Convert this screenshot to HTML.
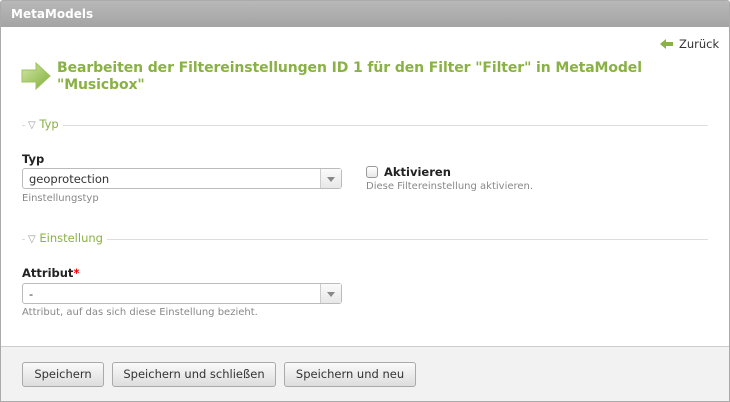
<!DOCTYPE html>
<html><head><meta charset="utf-8"><style>
*{margin:0;padding:0;box-sizing:border-box}
body{width:730px;height:402px;background:#fff;font-family:"DejaVu Sans","Liberation Sans",sans-serif;font-size:11px;color:#444;position:relative;overflow:hidden}
.frame{position:absolute;left:0;top:0;width:730px;height:402px;border:1px solid #aaa;border-radius:3px 3px 0 0}
.hd{position:absolute;left:1px;top:1px;width:728px;height:26px;background:linear-gradient(#b8b8b8,#a4a4a4);color:#fff;font-weight:bold;font-size:12px;padding:6px 0 0 10px}
.back{position:absolute;left:660px;top:37px;font-size:11.5px;color:#333}
.back svg{position:absolute;left:0;top:1px}
.title{position:absolute;left:57px;top:60px;width:620px;color:#8ab144;font-weight:bold;font-size:14px;line-height:17px;letter-spacing:-0.1px}
.leg{position:absolute;left:22px;height:1px;background:#ddd;width:686px}
.leg span{position:absolute;top:-7px;left:3px;background:#fff;padding:0 4px 0 3px;color:#8ab144;font-size:11.5px;line-height:13px}
.leg span i{font-style:normal;color:#999;font-size:10px}
.lbl{position:absolute;left:22px;font-weight:bold;color:#222;font-size:11.5px}
.sel{position:absolute;left:22px;width:320px;height:21px;border:1px solid #bbb;border-radius:3px;background:#fff;padding:3px 6px;font-size:11.5px;color:#333}
.sel:after{content:"";position:absolute;right:0;top:0;width:20px;height:19px;border-left:1px solid #ccc;background:linear-gradient(#fbfbfb,#e8e8e8)}
.sel b{position:absolute;right:6px;top:8px;width:0;height:0;border-left:4px solid transparent;border-right:4px solid transparent;border-top:5px solid #888;z-index:2}
.hint{position:absolute;left:22px;color:#888;font-size:10px}
.foot{position:absolute;left:1px;top:346px;width:728px;height:55px;background:#f2f2f2;border-top:1px solid #ccc}
.btn{position:absolute;top:362px;height:25px;border:1px solid #aaa;border-radius:3px;background:linear-gradient(#fafafa,#ddd);font-size:11.5px;color:#333;text-align:center;line-height:23px}
</style></head><body>
<div class="frame"></div>
<div class="hd">MetaModels</div>
<div class="back"><svg width="14" height="12" viewBox="0 0 14 12"><path d="M0 6L6 1V4H13V8H6V11Z" fill="#8ab144"/></svg><span style="margin-left:19px">Zurück</span></div>
<svg style="position:absolute;left:21px;top:62px" width="30" height="28" viewBox="0 0 30 28"><defs><linearGradient id="g" x1="0" y1="0" x2="1" y2="1"><stop offset="0" stop-color="#d5e8a8"/><stop offset="1" stop-color="#7fae3a"/></linearGradient></defs><path d="M1 8H15V1L29 14L15 27V20H1Z" fill="url(#g)" stroke="#9cc35c"/></svg>
<div class="title">Bearbeiten der Filtereinstellungen ID 1 für den Filter "Filter" in MetaModel "Musicbox"</div>
<div class="leg" style="top:125px"><span><i>▽</i> Typ</span></div>
<div class="lbl" style="top:152px">Typ</div>
<div class="sel" style="top:168px">geoprotection<b></b></div>
<div class="hint" style="top:193px">Einstellungstyp</div>
<div style="position:absolute;left:366px;top:166px;width:12px;height:12px;border:1px solid #999;border-radius:3px;background:linear-gradient(#fff,#e8e8e8)"></div>
<div class="lbl" style="left:384px;top:165px">Aktivieren</div>
<div class="hint" style="left:366px;top:181px">Diese Filtereinstellung aktivieren.</div>
<div class="leg" style="top:239px"><span><i>▽</i> Einstellung</span></div>
<div class="lbl" style="top:266px">Attribut<span style="color:#e00">*</span></div>
<div class="sel" style="top:283px">-<b></b></div>
<div class="hint" style="top:307px">Attribut, auf das sich diese Einstellung bezieht.</div>
<div class="foot"></div>
<div class="btn" style="left:22px;width:82px">Speichern</div>
<div class="btn" style="left:112px;width:164px">Speichern und schließen</div>
<div class="btn" style="left:284px;width:132px">Speichern und neu</div>
</body></html>
